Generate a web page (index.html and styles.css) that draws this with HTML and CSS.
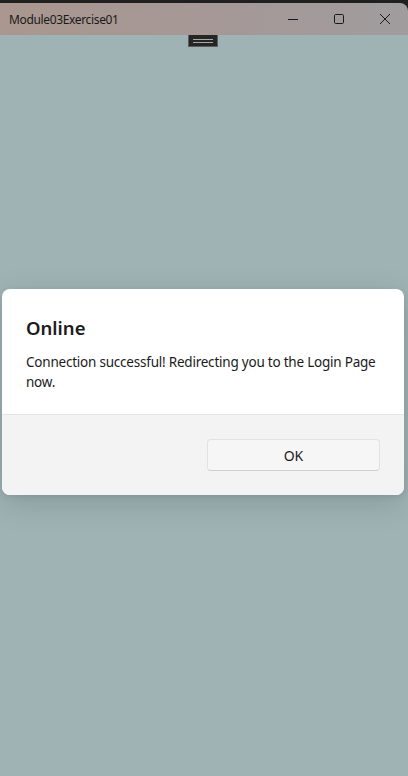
FILE: index.html
```html
<!DOCTYPE html>
<html lang="en">
<head>
<meta charset="utf-8">
<title>Module03Exercise01</title>
<link rel="stylesheet" href="styles.css">
</head>
<body>
<div class="window">
  <div class="topstrip"></div>
  <header class="titlebar">
    <span class="title">Module03Exercise01</span>
    <div class="controls">
      <span class="ctl">
        <svg width="12" height="12" viewBox="0 0 12 12"><path d="M1 6.5h10" stroke="#1a1a1a" stroke-width="1" fill="none"/></svg>
      </span>
      <span class="ctl">
        <svg width="12" height="12" viewBox="0 0 12 12"><rect x="1.5" y="1.5" width="9" height="9" rx="1.2" stroke="#1a1a1a" stroke-width="1" fill="none"/></svg>
      </span>
      <span class="ctl">
        <svg width="12" height="12" viewBox="0 0 12 12"><path d="M1 1l10 10M11 1L1 11" stroke="#1a1a1a" stroke-width="1" fill="none"/></svg>
      </span>
    </div>
  </header>
  <main class="content">
    <div class="handle-row"><div class="handle"><span></span><span></span></div></div>
    <div class="dialog-area">
      <div class="dialog">
        <div class="dialog-body">
          <h1 class="dialog-title">Online</h1>
          <p class="dialog-text">Connection successful! Redirecting you to the Login Page now.</p>
        </div>
        <div class="dialog-footer">
          <button class="btn">OK</button>
        </div>
      </div>
    </div>
  </main>
</div>
</body>
</html>
```
FILE: styles.css
```css
* { box-sizing: border-box; }
html, body { margin: 0; padding: 0; }
body {
  width: 408px;
  height: 776px;
  overflow: hidden;
  background: #9fb3b4;
  font-family: "Noto Sans", "Open Sans", sans-serif;
  color: #1b1b1b;
}
.window {
  display: flex;
  flex-direction: column;
  height: 776px;
  background: #202020;
}
.topstrip {
  height: 3px;
  background: #202020;
  flex: none;
}
.titlebar {
  flex: none;
  height: 32px;
  display: flex;
  align-items: center;
  justify-content: space-between;
  background: linear-gradient(90deg, #aa978f 0%, #a59896 50%, #a09c9e 100%);
  border-top-right-radius: 8px;
  padding-left: 9px;
}
.title {
  font-size: 12px;
  color: #1a1a1a;
  letter-spacing: -0.35px;
}
.controls {
  display: flex;
  height: 100%;
}
.ctl {
  width: 46px;
  height: 100%;
  display: flex;
  align-items: center;
  justify-content: center;
}
.content {
  flex: 1;
  background: #9fb3b4;
  display: flex;
  flex-direction: column;
}
.handle-row {
  display: flex;
  justify-content: center;
}
.handle {
  width: 30px;
  height: 12px;
  background: #262626;
  border: 1px solid #5c5c5c;
  border-top: none;
  display: flex;
  flex-direction: column;
  justify-content: center;
  align-items: center;
  gap: 2px;
  margin-left: -2px;
}
.handle span {
  display: block;
  width: 20px;
  height: 1px;
  background: #a8a8a8;
}
.dialog-area {
  padding: 242px 4px 0 2px;
}
.dialog {
  background: #ffffff;
  border-radius: 8px;
  overflow: hidden;
  box-shadow: 0 8px 32px rgba(0, 0, 0, 0.14), 0 2px 6px rgba(0, 0, 0, 0.08);
}
.dialog-body {
  padding: 26px 22px 24px 24px;
  height: 125px;
}
.dialog-title {
  margin: 0;
  font-size: 18.5px;
  font-weight: 600;
  line-height: 26px;
  color: #1b1b1b;
}
.dialog-text {
  margin: 11px 0 0 0;
  font-size: 13.5px;
  letter-spacing: -0.22px;
  line-height: 20px;
  color: #1b1b1b;
}
.dialog-footer {
  background: #f3f3f3;
  border-top: 1px solid #e5e5e5;
  height: 81px;
  display: flex;
  justify-content: flex-end;
  align-items: flex-start;
  padding: 24px 24px 0 0;
}
.btn {
  width: 173px;
  height: 32px;
  background: #f6f6f6;
  border: 1px solid #e2e2e2;
  border-bottom-color: #d0d0d0;
  border-radius: 4px;
  font-family: "Noto Sans", "Open Sans", sans-serif;
  font-size: 14px;
  color: #1b1b1b;
  padding: 0;
}
```
